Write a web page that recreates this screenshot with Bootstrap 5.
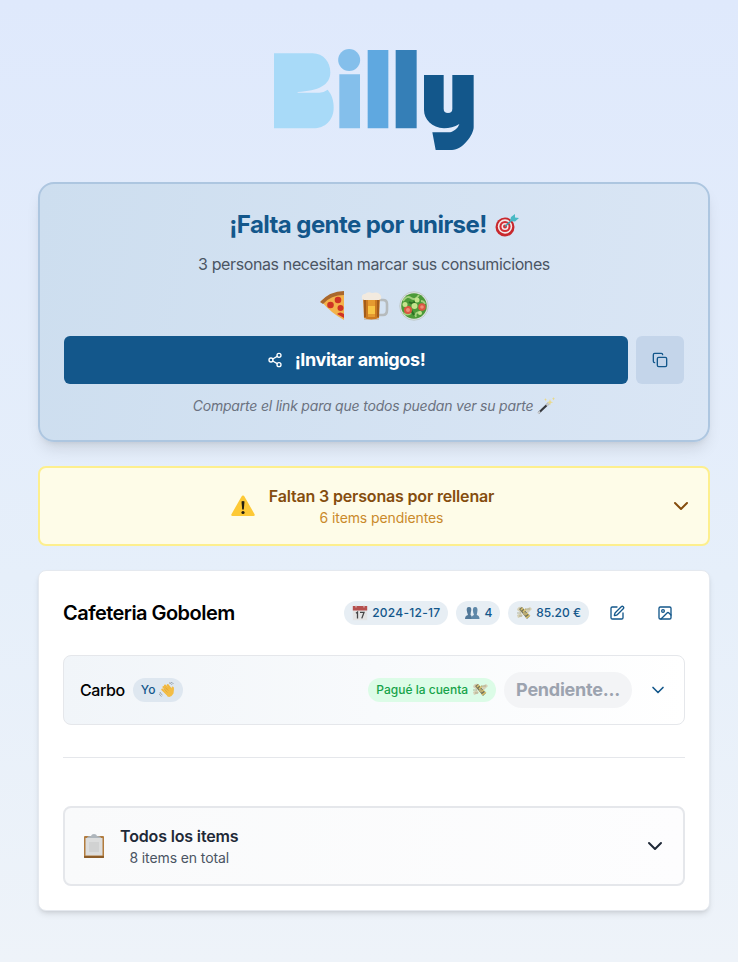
<!DOCTYPE html>
<html lang="es">
<head>
    <meta charset="UTF-8" />
    <meta name="viewport" content="width=device-width, initial-scale=1.0" />
    <title>Billy - Cafeteria Gobolem</title>
    <link href="https://cdn.jsdelivr.net/npm/bootstrap@5.3.0/dist/css/bootstrap.min.css" rel="stylesheet">
    <style>
        :root { --billy: #13578b; }
        body {
            font-family: Inter, "Liberation Sans", sans-serif;
            line-height: 24px;
            min-height: 962px;
            background: linear-gradient(#dfe9fc, #e6effa 60%, #eef3f9);
            color: #000;
        }
        svg { display: block; flex-shrink: 0; }
        .line-icon { fill: none; stroke: currentColor; stroke-width: 2; stroke-linecap: round; stroke-linejoin: round; }
        .page { padding: 49px 28px 51px 38px; }
        .logo { margin: 0 auto 32px; }

        .invite {
            padding: 25px 24px 24px;
            margin-bottom: 24px;
            border: 2px solid #adc6e0;
            border-radius: 16px;
            background: linear-gradient(100deg, #cddeef, #dae6f5);
            box-shadow: 0 10px 15px -3px rgba(0,0,0,.1), 0 4px 6px -4px rgba(0,0,0,.1);
        }
        .invite h1 { font-size: 24px; line-height: 32px; font-weight: 700; color: var(--billy); letter-spacing: -.58px; margin-bottom: 11px; }
        .invite-text { color: #4b5563; letter-spacing: -.38px; margin-bottom: 12px; }
        .foods { height: 36px; margin-bottom: 12px; gap: 9px; padding-right: 3px; }
        .btn-invite { height: 48px; border: 0; border-radius: 6px; background: var(--billy); color: #fff; font-size: 18px; line-height: 24px; font-weight: 700; }
        .invite-label { letter-spacing: -.38px; margin-top: -1px; }
        .btn-copy { width: 48px; height: 48px; padding: 0; border: 0; border-radius: 6px; background: #c4d5ea; color: var(--billy); }
        .hint { font-size: 14px; line-height: 20px; font-style: italic; letter-spacing: -.2px; color: #6b7280; margin-top: 12px; }

        .pending { padding: 16px 15px 16px 16px; margin-bottom: 24px; border: 2px solid #fdef8e; border-radius: 8px; background: #fefce8; color: #854d0e; }
        .pending-text { margin-left: 14px; letter-spacing: -.17px; }
        .sub { font-size: 14px; line-height: 20px; letter-spacing: -.1px; }
        .pending .sub { color: #ca8a2b; }

        .bill { padding: 24px; border: 1px solid #e5e9ef; border-radius: 8px; background: #fff; box-shadow: 0 4px 6px -1px rgba(0,0,0,.1), 0 2px 4px -2px rgba(0,0,0,.1); }
        .bill-head { height: 36px; margin-bottom: 24px; }
        .bill-head h2 { font-size: 20px; line-height: 28px; font-weight: 600; letter-spacing: -.54px; }
        .pill { display: inline-flex; align-items: center; gap: 4px; height: 24px; padding: 0 8px; border-radius: 12px; font-size: 12px; font-weight: 500; white-space: nowrap; background: #e7eef4; color: var(--billy); }
        .pill-date { letter-spacing: .27px; }
        .pill-me { background: #dee7f0; }
        .pill-paid { background: #dcfce7; color: #16a34a; }
        .pill-wait { height: 36px; padding: 0 12px; border-radius: 18px; font-size: 18px; font-weight: 700; letter-spacing: -.24px; background: #f3f4f6; color: #9ca3af; }
        .btn-tool { width: 40px; height: 36px; padding: 0; border: 0; color: var(--billy); }
        .person { height: 70px; padding: 0 16px; border: 1px solid #e5e7eb; border-radius: 8px; background: linear-gradient(90deg, #f1f5f9, #fff); }
        .person-name { letter-spacing: -.4px; }
        .rule { height: 1px; margin: 32px 0 48px; background: #e5e7eb; }
        .all-items { height: 80px; padding: 0 16px; border: 2px solid #e5e7eb; border-radius: 8px; background: linear-gradient(90deg, #f9fafb, #fdfdfe); color: #1f2937; }
        .all-text { margin-left: 13px; letter-spacing: -.15px; }
        .all-text .sub { color: #4b5563; }
    </style>
</head>
<body>
    <!-- Emoji drawings -->
    <svg width="0" height="0" class="position-absolute">
        <symbol id="target" viewBox="0 0 24 24">
            <circle cx="10" cy="14" r="9.5" fill="#c8282d"/><circle cx="10" cy="13.5" r="7.2" fill="#f3e9ea"/><circle cx="10" cy="13.5" r="5.6" fill="#d22f35"/><circle cx="10" cy="13.5" r="3.5" fill="#f3e9ea"/><circle cx="10" cy="13.5" r="2" fill="#d22f35"/>
            <path d="M10 13.500 18 6" stroke="#3e9fae" stroke-width="1.500"/><path d="M15 8 16 4l4-3v3.500l4 .5-4 3.500z" fill="#48b9c4"/>
        </symbol>
        <symbol id="pizza" viewBox="0 0 30 30">
            <path d="M3 10Q13 1 26 1V29Q13 22 3 10Z" fill="#f3b24a"/><path d="M2 11Q12 0 26 0V4Q13 4 5 13Z" fill="#a9672c"/>
            <g fill="#cf3424"><circle cx="20" cy="9" r="3.300"/><circle cx="12.500" cy="14" r="3.300"/><circle cx="22.500" cy="17" r="3"/><path d="M19 23Q22 20 26 23V27Z"/></g>
        </symbol>
        <symbol id="beer" viewBox="0 0 30 30">
            <path d="M19 9h5q4 0 4 4v6q0 5-4 5h-5" fill="none" stroke="#b6bbbd" stroke-width="2.600"/>
            <path d="M4 7H21L20 27Q12 31 5 27Z" fill="#cc7a20"/><path d="M9 8h7v18H9z" fill="#e59a30"/><path d="M9 15h7v8H9z" fill="#f8c545"/><path d="M6 8v18M19 8v18" stroke="#955319" stroke-width="1.500"/><path d="M5 27Q12 30 20 27V29H5Z" fill="#c9c3bb"/>
            <path d="M3 8Q2 3 6 3Q9 0 13 2Q20 0 22 5Q23 8 20 9H5Z" fill="#f2eadf"/>
        </symbol>
        <symbol id="salad" viewBox="0 0 30 30">
            <circle cx="15" cy="15" r="14.300" fill="#dce1df" stroke="#aab4b2" stroke-width=".5"/><circle cx="15" cy="15" r="12.800" fill="#4c9a38"/>
            <path d="M4 10Q8 4 12 7T20 4M4 22Q9 25 12 22M17 26q-2-5 5-5M22 10q3 0 4 3" fill="none" stroke="#a3cf7c" stroke-width="1.800"/><path d="M10 11q4 3 6-1M12 19l3 5" stroke="#2c7023" stroke-width="2" fill="none"/>
            <g fill="#dc5742"><circle cx="9" cy="19" r="4"/><circle cx="23" cy="16" r="3.800"/></g><g fill="#f09078"><circle cx="9" cy="19" r="2"/><circle cx="23" cy="16" r="1.800"/></g><g fill="#c4e38c"><circle cx="15.500" cy="15" r="3"/><circle cx="18" cy="9" r="2.500"/><circle cx="6" cy="13.500" r="2.500"/><circle cx="21" cy="22" r="2"/></g>
        </symbol>
        <symbol id="wand" viewBox="0 0 18 18">
            <path d="M1.500 16 12 6" stroke="#35383e" stroke-width="2.200"/><path d="m1 16.500 2-2M9.500 8.500l3-3" stroke="#c9ccd0" stroke-width="2.200"/>
            <path d="m13 2 .8 2.400 2.400.8-2.400.8L13 8.500l-.8-2.500-2.400-.8 2.400-.8zM16.500 0l.5 1.300 1 .5-1 .5-.5 1.200-.5-1.200-1-.5 1-.5zM8.500 1l.5 1.200 1 .4-1 .4-.5 1.200L8 3l-1-.4 1-.4z" fill="#e9d98a"/>
        </symbol>
        <symbol id="warning" viewBox="0 0 24 24">
            <path d="M12 1.500Q13 1.500 13.600 2.700L23.700 20.500Q24 22 22.500 22H1.500Q0 22 .3 20.500L10.400 2.700Q11 1.500 12 1.500Z" fill="#fdc936"/><path d="M10.500 7.500Q12 6.500 13.500 7.500L12.800 15.500H11.200Z" fill="#231f10"/><circle cx="12" cy="18.500" r="1.600" fill="#231f10"/>
        </symbol>
        <symbol id="calendar" viewBox="0 0 16 16">
            <path d="M.8 4h14.400v11.200H.8z" fill="#e4e4e4"/><path d="M.8 1h14.400v4.500H.8z" fill="#b6504f"/><path d="M4 0v2.500M12 0v2.500" stroke="#e0d6d6"/><path d="M4 8.200 5.500 7v6.500M8 7.400h4l-2.200 6" fill="none" stroke="#444" stroke-width="1.300"/>
        </symbol>
        <symbol id="people" viewBox="0 0 16 16">
            <path d="M1 14Q1 10.500 4 10L3.200 7.500Q1.500 2 5 2T6.800 7.500L6.500 10Q8 10.500 8 14Z" fill="#527999"/><path d="M7.500 14Q7.500 10.500 10 10L9.200 7.500Q8 2 11.200 2T13.200 7.500L12.700 10Q15.500 10.500 15.500 14Z" fill="#5f88a9"/>
        </symbol>
        <symbol id="money" viewBox="0 0 16 16">
            <path d="M1 5Q2 1 6 2L8 5 5 8ZM9 5 14 2 16 4 12 8ZM1 10 5 8 7 11 2 13Z" fill="#d6d0b5"/><path d="M3 4 6 2 14 11 11 14Z" fill="#77765b"/><path d="m5 5 2-2M7 7l3-3M9 10l3-2M10 13l4-3" stroke="#dcc46d" stroke-width="1.500"/><circle cx="8.500" cy="8.500" r="1.700" fill="#b8aa77"/><path d="M9 4h5M1 8h4M3 11h3" stroke="#a7a486" stroke-width=".8"/>
        </symbol>
        <symbol id="wave" viewBox="0 0 16 16">
            <path d="M4.500 5 9 10M6 3.500l5 5.500M8.800 3.200 12.500 8M3.300 7.500 8 12" stroke="#f1b840" stroke-width="2.100" stroke-linecap="round"/><path d="M5 9 12 6.500 13.300 4.500Q15.200 4 15 7L14.500 11.500Q12 16 8.500 14.500Z" fill="#f3bd46"/><path d="m6.500 5.500 3 3.200M5 7l3.500 3.500" stroke="#cf8c2c" stroke-width=".4"/>
            <path d="M10 .8q2 .4 3 2M11.500 0q2 .4 3 2M1 10q.5 2 2.500 3M0 11.500q1 2 2.500 3" fill="none" stroke="#929da8" stroke-width=".9"/>
        </symbol>
        <symbol id="clipboard" viewBox="0 0 24 26">
            <rect x="2" y="3" width="20" height="22" rx="1" fill="#b27c3e"/><path d="M3.500 5h17v17.500h-17z" fill="#dcdddd"/><path d="M7 9h10v10H7z" fill="#d1d2d2"/><path d="M2 24h20" stroke="#805323" stroke-width="1.500"/><path d="M5 5q0-2 4-2 .5-2 3-2t3 2q4 0 4 2z" fill="#aeb6bc"/>
        </symbol>
    </svg>

    <main class="page">
        <!-- Logo -->
        <svg class="logo" width="200" height="101" viewBox="42 27 600 303" role="img" aria-label="Billy">
            <path fill="#a8daf8" d="M42 40H158C190 40 211 66 211 97C211 136 175 153 113 156V158H178Q191 158 203 149C215 164 221 180 221 203C221 240 195 265 160 265H42Z"/>
            <circle fill="#84bfeb" cx="267.500" cy="60" r="33"/>
            <path fill="#84bfeb" d="M238 103h62v162h-62z"/>
            <path fill="#5fa8e0" d="M323 30h62v235h-62z"/>
            <path fill="#357fb7" d="M407 30h63v235h-63z"/>
            <path fill="#13578b" d="M492 105H551V206Q551 219 564 219Q577 219 577 206V105H641V262C641 284 608 330 576 330H527L517 277H565C580 277 594 265 598 252Q576 265 552 265C516 263 492 238 492 210Z"/>
        </svg>

        <!-- Invite -->
        <section class="invite text-center">
            <h1 class="d-flex justify-content-center align-items-center gap-2">¡Falta gente por unirse! <svg width="24" height="24"><use href="#target"/></svg></h1>
            <p class="invite-text">3 personas necesitan marcar sus consumiciones</p>
            <div class="foods d-flex justify-content-center align-items-center">
                <svg width="32" height="30"><use href="#pizza"/></svg>
                <svg width="32" height="30"><use href="#beer"/></svg>
                <svg width="30" height="30"><use href="#salad"/></svg>
            </div>
            <div class="d-flex gap-2">
                <button type="button" class="btn btn-invite flex-grow-1 d-flex justify-content-center align-items-center">
                    <svg class="line-icon me-2" width="16" height="16" viewBox="0 0 24 24"><circle cx="18" cy="5" r="3"/><circle cx="6" cy="12" r="3"/><circle cx="18" cy="19" r="3"/><path d="m8.590 13.510 6.830 3.980M15.410 6.510l-6.820 3.980"/></svg>
                    <span class="ms-1 invite-label">¡Invitar amigos!</span>
                </button>
                <button type="button" class="btn btn-copy d-flex justify-content-center align-items-center" aria-label="Copiar">
                    <svg class="line-icon" width="16" height="16" viewBox="0 0 24 24"><rect x="8" y="8" width="14" height="14" rx="2"/><path d="M4 16c-1.100 0-2-.9-2-2V4c0-1.100.9-2 2-2h10c1.100 0 2 .9 2 2"/></svg>
                </button>
            </div>
            <div class="hint d-flex justify-content-center align-items-center">Comparte el link para que todos puedan ver su parte <svg class="ms-1" width="18" height="18"><use href="#wand"/></svg></div>
        </section>

        <!-- Pending people -->
        <section class="pending d-flex align-items-center">
            <div class="flex-grow-1 d-flex justify-content-center align-items-center">
                <svg width="24" height="24"><use href="#warning"/></svg>
                <div class="pending-text text-center">
                    <div class="fw-semibold">Faltan 3 personas por rellenar</div>
                    <div class="sub">6 items pendientes</div>
                </div>
            </div>
            <svg class="line-icon" width="24" height="24" viewBox="0 0 24 24"><path d="m6 9 6 6 6-6"/></svg>
        </section>

        <!-- Bill -->
        <section class="bill">
            <div class="bill-head d-flex align-items-center gap-2">
                <h2 class="mb-0 me-auto">Cafeteria Gobolem</h2>
                <span class="pill pill-date"><svg width="16" height="16"><use href="#calendar"/></svg>2024-12-17</span>
                <span class="pill"><svg width="16" height="16"><use href="#people"/></svg>4</span>
                <span class="pill"><svg width="16" height="16"><use href="#money"/></svg>85.20 €</span>
                <button type="button" class="btn btn-tool d-flex justify-content-center align-items-center" aria-label="Editar">
                    <svg class="line-icon" width="16" height="16" viewBox="0 0 24 24"><path d="M12 3H5a2 2 0 0 0-2 2v14a2 2 0 0 0 2 2h14a2 2 0 0 0 2-2v-7"/><path d="M18.375 2.625a1 1 0 0 1 3 3l-9.010 9.010a2 2 0 0 1-.85.500l-2.880.84a.5.5 0 0 1-.62-.62l.84-2.870a2 2 0 0 1 .500-.86z"/></svg>
                </button>
                <button type="button" class="btn btn-tool d-flex justify-content-center align-items-center" aria-label="Imagen">
                    <svg class="line-icon" width="16" height="16" viewBox="0 0 24 24"><rect x="3" y="3" width="18" height="18" rx="2"/><circle cx="9" cy="9" r="2"/><path d="m21 15-3.086-3.086a2 2 0 0 0-2.828 0L6 21"/></svg>
                </button>
            </div>

            <div class="person d-flex align-items-center gap-2">
                <span class="fw-medium person-name">Carbo</span>
                <span class="pill pill-me me-auto">Yo <svg width="16" height="16"><use href="#wave"/></svg></span>
                <span class="pill pill-paid">Pagué la cuenta <svg width="16" height="16"><use href="#money"/></svg></span>
                <span class="pill pill-wait">Pendiente...</span>
                <svg class="line-icon ms-2" width="20" height="20" viewBox="0 0 24 24" color="#13578b"><path d="m6 9 6 6 6-6"/></svg>
            </div>

            <div class="rule"></div>

            <div class="all-items d-flex align-items-center">
                <svg width="26" height="26"><use href="#clipboard"/></svg>
                <div class="all-text text-center me-auto">
                    <div class="fw-semibold">Todos los items</div>
                    <div class="sub">8 items en total</div>
                </div>
                <svg class="line-icon" width="24" height="24" viewBox="0 0 24 24"><path d="m6 9 6 6 6-6"/></svg>
            </div>
        </section>
    </main>
    <script src="https://cdn.jsdelivr.net/npm/bootstrap@5.3.0/dist/js/bootstrap.bundle.min.js"></script>
</body>
</html>
